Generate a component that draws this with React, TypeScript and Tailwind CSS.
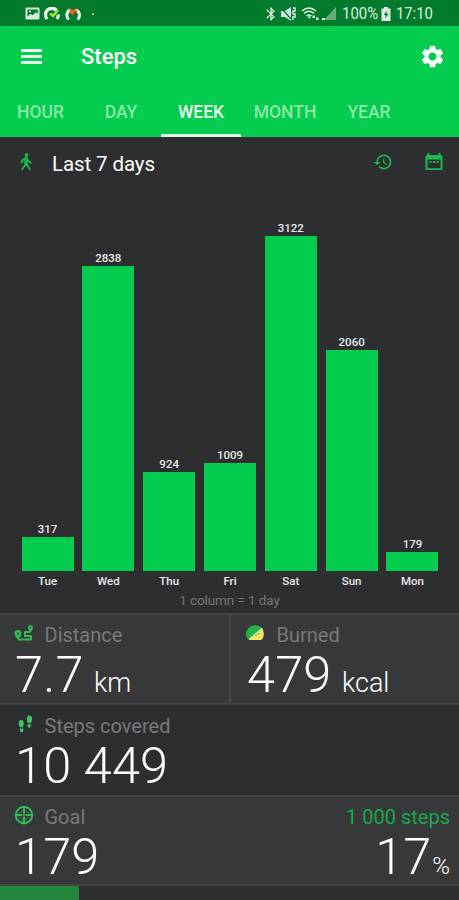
import type { ReactNode } from "react";
import { MdBluetooth, MdSettings, MdHistory } from "react-icons/md";

const DAYS = [
  { day: "Tue", steps: 317, height: 34 },
  { day: "Wed", steps: 2838, height: 305 },
  { day: "Thu", steps: 924, height: 99 },
  { day: "Fri", steps: 1009, height: 108 },
  { day: "Sat", steps: 3122, height: 335 },
  { day: "Sun", steps: 2060, height: 221 },
  { day: "Mon", steps: 179, height: 19 },
];

const TABS = [
  { label: "HOUR", width: "w-[81px]" },
  { label: "DAY", width: "w-[80px]" },
  { label: "WEEK", width: "w-[80px]", active: true },
  { label: "MONTH", width: "w-[88px]" },
  { label: "YEAR", width: "w-[80px]" },
];

function StatusBar() {
  return (
    <div className="flex h-[26px] items-center bg-[#027a2c] pt-px pr-[27px] pl-[25px] text-[#dcefe0]">
      <svg width="15" height="13" viewBox="0 0 15 13" className="mr-[4px]">
        <path fill="#d5ead8" fillRule="evenodd" d="M1.5.5h12a1 1 0 0 1 1 1v10a1 1 0 0 1-1 1h-12a1 1 0 0 1-1-1v-10a1 1 0 0 1 1-1Zm1 2v7.3l3-3 2 1.5 3.5-3 1.8 1.7V2.5Z" />
        <path fill="#d5ead8" d="M4 3.5h2v1.7H4z" />
      </svg>
      <svg width="17" height="14" viewBox="0 0 17 14" className="mr-[4px]">
        <path d="M3.2 12A6 6 0 0 1 12.500 3.300M14.200 7.500q.3 2-1.200 4.500" fill="none" stroke="#f5fff5" strokeWidth="3.2" />
        <path d="m6 6.500 3 2.500 5-6" fill="none" stroke="#9be83a" strokeWidth="2.6" />
      </svg>
      <svg width="16" height="14" viewBox="0 0 16 14">
        <path d="M3.8 12.500A6 6 0 0 1 5 2.8M11 2.8a6 6 0 0 1 1.7 9.7" fill="none" stroke="#f0faf0" strokeWidth="3" />
        <path d="m4 1 3.500 2L11 1l1.500 5-3-1L8 8.500 5 6Z" fill="#ee662d" />
      </svg>
      <i className="ml-[11px] size-[2px] rounded-full bg-[#c5e4ca]" />
      <div className="ml-auto flex items-center">
        <MdBluetooth size={16} className="mr-[2px]" />
        <svg width="16" height="14" viewBox="0 0 16 14" className="mr-[4px]">
          <path fill="currentColor" d="M0 4h4l6-4v14l-6-4H0z" />
          <path d="M12 1h2v3h-2v3h2v3h-2v3" stroke="currentColor" strokeWidth="1.500" fill="none" />
          <path d="m0 1 10 11" stroke="#027a2c" strokeWidth="1.300" />
        </svg>
        <svg width="19" height="14" viewBox="0 0 19 14" className="mr-[2px]">
          <g fill="none" stroke="currentColor" strokeWidth="1.500">
            <path d="M1 4q7-6 14 0M3 6.500q5-4.500 10 0M5.500 9q2.500-2 5 0" />
          </g>
          <path fill="currentColor" d="m6.500 9.500 3.500 0-1.700 2.500zM11.500 8.500h2.500v2.500h-2.500zM15 10.500h2.500v2.500H15z" />
        </svg>
        <svg width="15" height="13" viewBox="0 0 15 13" className="mr-[5px]">
          <path fill="#68ad79" d="M14 0v13H2z" />
          <path fill="currentColor" d="M0 11h3v2H0z" />
        </svg>
        <span className="w-[34px] origin-left scale-x-[.88] text-[17px] leading-none whitespace-nowrap">100%</span>
        <svg width="10" height="14" viewBox="0 0 10 14" className="mr-[5px] ml-[5px]">
          <path fill="currentColor" d="M3 0h4v1.500h2.500V14h-9V1.500H3z" />
          <path fill="#027a2c" d="M5.800 3.500 2.800 8h1.900l-.5 3.500L7.500 7H5.500z" />
        </svg>
        <span className="w-[36px] origin-left scale-x-[.87] text-[17px] leading-none whitespace-nowrap">17:10</span>
      </div>
    </div>
  );
}

function Walker() {
  return (
    <svg width="12" height="18" viewBox="0 0 12 18" fill="none" stroke="#17b94a" strokeWidth="1.900" strokeLinecap="round" strokeLinejoin="round">
      <circle cx="6.500" cy="2" r="1.900" fill="#17b94a" stroke="none" />
      <path d="M6.300 5v5.500L2.200 16.200M6.300 10.500l3.500 5.700M1.500 9.500l1.500-3L6.300 5l2 3 2.400 1.700" />
      <path d="M6 5.500v5" strokeWidth="3.500" />
    </svg>
  );
}

function CalendarIcon() {
  return (
    <svg width="18" height="18" viewBox="0 0 18 18">
      <path fill="#19b94c" fillRule="evenodd" d="M2.500 0h2v2h9V0h2v2H16a1.500 1.500 0 0 1 1.500 1.500v12A1.500 1.500 0 0 1 16 17H2A1.500 1.500 0 0 1 .5 15.500v-12A1.500 1.500 0 0 1 2 2h.5ZM2.500 6.500v8.700h13V6.500Z" />
      <path fill="#19b94c" d="M4.500 8h2v2h-2zM8 8h2v2H8zM11.500 8h2v2h-2z" />
    </svg>
  );
}

function RouteIcon() {
  return (
    <svg width="20" height="18" viewBox="0 0 20 18">
      <path d="M4 15.500h13v-3.500h-6V8h5.500" fill="none" stroke="#35b957" strokeWidth="1.900" strokeLinejoin="round" />
      <path fill="#35b957" fillRule="evenodd" d="M4 16C2 13 .5 11.500.5 9.500a3.500 3.500 0 0 1 7 0c0 2-1.500 3.500-3.500 6.500Zm0-7.500A1 1 0 1 0 4 10.500a1 1 0 0 0 0-2Z" />
      <path fill="#35b957" fillRule="evenodd" d="M16.500 8.500C15 6 14 5 14 3.500a2.500 2.500 0 0 1 5 0c0 1.500-1 2.500-2.500 5Zm0-5.800a.8.8 0 1 0 0 1.600.8.8 0 0 0 0-1.600Z" />
    </svg>
  );
}

function BurnedIcon() {
  return (
    <svg width="18" height="16" viewBox="0 0 18 16">
      <path fill="#22b44b" d="M3 14.500Q0 13 0 8.500 1 2 7 .5q6-1 9 2.500Z" />
      <path fill="#f2e968" d="M16 3q2 2 1.800 6.500-.2 4-2.500 5.500H3Z" />
      <path d="m3 14.500 13-11" stroke="#eaf3b0" strokeWidth="1.200" />
      <path d="m9 11.500 2-2.500 3-.5" fill="none" stroke="#a9a544" />
    </svg>
  );
}

function FootprintsIcon() {
  return (
    <svg width="15" height="19" viewBox="0 0 15 19" fill="#37c95c">
      <path d="M3.200 5C5.500 5 6 7.500 5.700 9.500L5 12.300H1.800L.8 9.500C.3 7 1.200 5 3.200 5ZM1.800 13.500h3.400v2.200a1.600 1.600 0 0 1-3.200 0ZM11.500.5c2.200 0 3 2.200 2.500 4.500l-1 3H9.800L9 5C8.800 2.500 9.500.5 11.500.5ZM9.600 9.300H13l-.3 2.200a1.600 1.600 0 0 1-3.100 0Z" />
    </svg>
  );
}

function GoalIcon() {
  return (
    <svg width="20" height="20" viewBox="0 0 20 20" fill="none" stroke="#31b957">
      <circle cx="10" cy="10" r="8.200" strokeWidth="2" />
      <path d="M10 1v7.500M10 11.500v7.500M1 10h7.500M11.500 10h7.500" strokeWidth="2.200" />
      <circle cx="10" cy="10" r="4.500" strokeWidth="1" opacity=".5" />
      <circle cx="10" cy="10" r="1" fill="#31b957" stroke="none" />
    </svg>
  );
}

function Metric({ icon, label, value, unit }: { icon: ReactNode; label: string; value: string; unit?: string }) {
  return (
    <div>
      <div className="flex h-[24px] items-center pt-1">
        <span className="flex w-[30.500px] shrink-0 pb-1">{icon}</span>
        <span className="text-[20px] leading-[20px] text-[#77797b]">{label}</span>
      </div>
      <div className="mt-[8px] flex h-[44px] items-baseline whitespace-nowrap text-white">
        <span className="ml-px text-[50.500px] leading-[44px] font-light tracking-[.15px]">{value}</span>
        {unit && <span className="ml-[10.500px] text-[27px] leading-none font-light">{unit}</span>}
      </div>
    </div>
  );
}

export default function App() {
  return (
    <main className="flex h-[900px] w-[459px] flex-col overflow-hidden bg-[#2d2e30] font-['Roboto',sans-serif]">
      <StatusBar />
      <header className="h-[111px] bg-[#04cc4e] text-white">
        <div className="flex h-[60px] items-center px-[21px]">
          <div className="flex w-[60px] flex-col gap-[3px] [&>i]:h-[3px] [&>i]:w-[21px] [&>i]:bg-[#e5ffed]">
            <i /><i /><i />
          </div>
          <h1 className="pt-px text-[22px] leading-none font-medium">Steps</h1>
          <MdSettings size={27} className="-mr-[8px] ml-auto" />
        </div>
        <nav className="flex h-[51px]">
          {TABS.map((tab) => (
            <div
              key={tab.label}
              className={`${tab.width} flex items-center justify-center border-b-[3px] pt-[5px] text-[17.500px] leading-none font-medium ${
                tab.active ? "border-[#dcf7e4] text-[#eefff2]" : "border-transparent text-[#8ae8a5]"
              }`}
            >
              {tab.label}
            </div>
          ))}
        </nav>
      </header>
      <section className="flex h-[476px] flex-col">
        <div className="flex h-[53px] items-center pl-[20px] text-white">
          <div className="w-[32px] pb-1"><Walker /></div>
          <h2 className="pt-px text-[20.500px] leading-none tracking-[-.1px]">Last 7 days</h2>
          <div className="mr-[25px] ml-auto flex items-center gap-[32px] pb-1 text-[#19b94c] [&>svg:last-child]:-mr-[9px]">
            <MdHistory size={20} />
            <CalendarIcon />
          </div>
        </div>
        <div className="flex h-[381px] items-end justify-between pr-[20.500px] pl-[21.500px]">
          {DAYS.map((d) => (
            <div key={d.day} className="flex w-[52px] flex-col items-center">
              <span className="mb-px text-[11.500px] leading-[14px] font-medium text-[#e8e8e8]">{d.steps}</span>
              <div className="w-full bg-[#04cc4e]" style={{ height: d.height }} />
            </div>
          ))}
        </div>
        <div className="flex justify-between pt-[3px] pr-[20.500px] pl-[21.500px]">
          {DAYS.map((d) => (
            <span key={d.day} className="w-[52px] text-center text-[11.500px] leading-[15px] font-medium text-[#e8e8e8]">{d.day}</span>
          ))}
        </div>
        <p className="mt-[3px] text-center text-[13.500px] leading-4 tracking-[-.1px] text-[#747678]">1 column = 1 day</p>
      </section>
      <section className="flex h-[92px] border-y-2 border-[#424345] bg-[#373839]">
        <div className="w-[231px] border-r-2 border-[#454648] pt-[6px] pl-[14px]">
          <Metric icon={<RouteIcon />} label="Distance" value="7.7" unit="km" />
        </div>
        <div className="pt-[6px] pl-[15px]">
          <Metric icon={<BurnedIcon />} label="Burned" value="479" unit="kcal" />
        </div>
      </section>
      <section className="h-[90px] pt-[7px] pl-[14px]">
        <Metric icon={<span className="ml-1"><FootprintsIcon /></span>} label="Steps covered" value="10 449" />
      </section>
      <section className="flex h-[91px] justify-between border-y-2 border-[#424345] bg-[#373839] pt-[6px] pr-[9px] pl-[14px]">
        <Metric icon={<GoalIcon />} label="Goal" value="179" />
        <div className="flex flex-col items-end text-white">
          <span className="h-[24px] pt-[4px] text-[20px] leading-[20px] text-[#18a84c]">1 000 steps</span>
          <div className="mt-[8px] flex h-[44px] items-baseline">
            <span className="text-[50.500px] leading-[44px] font-light">17</span>
            <span className="ml-px text-[24px] leading-none font-light">%</span>
          </div>
        </div>
      </section>
      <div className="min-h-0 flex-1">
        <div className="h-full w-[79px] bg-[#24873b]" />
      </div>
    </main>
  );
}
